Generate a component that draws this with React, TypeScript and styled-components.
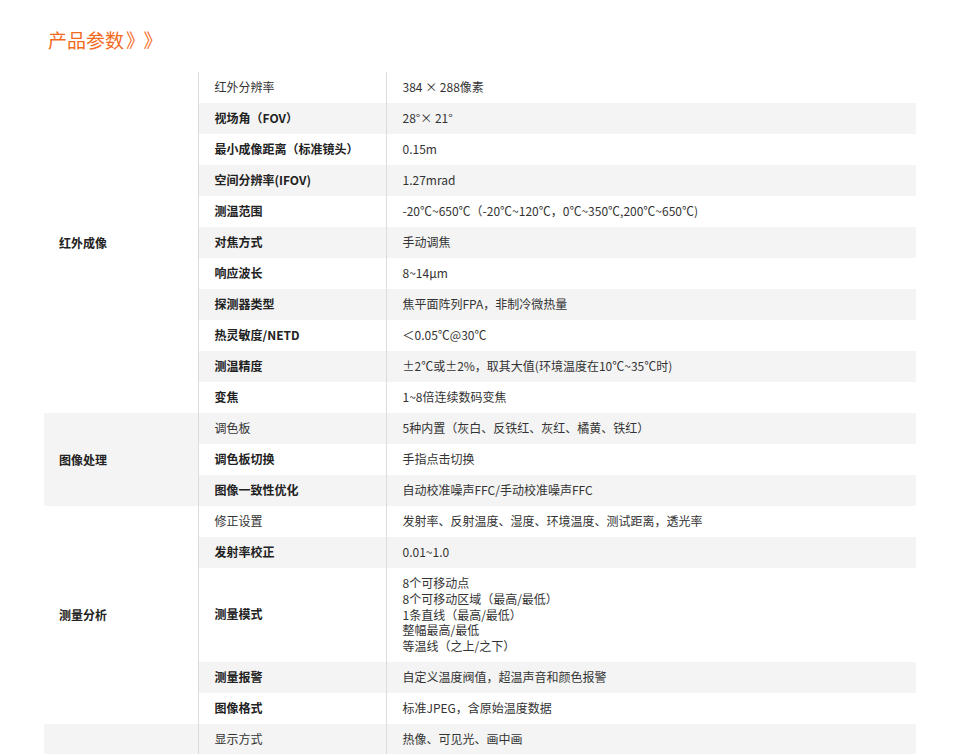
import React from "react";
import styled, { createGlobalStyle } from "styled-components";

const Global = createGlobalStyle`
  html, body { margin: 0; padding: 0; background: #fff; }
  body { font-family: "Noto Sans CJK SC", "Noto Sans", sans-serif; color: #333; }
`;

const Page = styled.div`
  padding: 28px 44px 0 44px;
  width: 872px;
`;

const Title = styled.h2`
  margin: 0 0 20px 4px;
  font-size: 19px;
  line-height: 24px;
  font-weight: 400;
  color: #f36a1d;
`;

const Arrows = styled.span`
  letter-spacing: 8px;
  margin-left: 2px;
`;

const Table = styled.table`
  width: 872px;
  border-collapse: collapse;
  table-layout: fixed;
  font-size: 12px;
  line-height: 16px;
  tbody tr:nth-child(even) { background: #f4f4f4; }
`;

const Col = styled.col<{ $w: number }>`
  width: ${(p) => p.$w}px;
`;

const GroupCell = styled.td`
  padding: 0 15px;
  font-weight: 700;
  vertical-align: middle;
  color: #222;
`;

const LabelCell = styled.td<{ $bold: boolean }>`
  height: 31px;
  box-sizing: border-box;
  padding: 7px 16px 8px;
  border-left: 1px solid #dcdcdc;
  font-weight: ${(p) => (p.$bold ? 700 : 400)};
  color: ${(p) => (p.$bold ? "#222" : "#333")};
  vertical-align: middle;
`;

const ValueCell = styled.td`
  padding: 7px 16px 8px;
  border-left: 1px solid #dcdcdc;
  color: #333;
  vertical-align: middle;
`;

const Line = styled.div`
  line-height: 15.8px;
`;

type Row = [string, string | string[]];
type Group = { name: string; rows: Row[] };

const groups: Group[] = [
  {
    name: "红外成像",
    rows: [
      ["红外分辨率", "384 × 288像素"],
      ["视场角（FOV）", "28°× 21°"],
      ["最小成像距离（标准镜头）", "0.15m"],
      ["空间分辨率(IFOV)", "1.27mrad"],
      ["测温范围", "-20℃~650℃（-20℃~120℃，0℃~350℃,200℃~650℃)"],
      ["对焦方式", "手动调焦"],
      ["响应波长", "8~14μm"],
      ["探测器类型", "焦平面阵列FPA，非制冷微热量"],
      ["热灵敏度/NETD", "＜0.05℃@30℃"],
      ["测温精度", "±2℃或±2%，取其大值(环境温度在10℃~35℃时)"],
      ["变焦", "1~8倍连续数码变焦"],
    ],
  },
  {
    name: "图像处理",
    rows: [
      ["调色板", "5种内置（灰白、反铁红、灰红、橘黄、铁红）"],
      ["调色板切换", "手指点击切换"],
      ["图像一致性优化", "自动校准噪声FFC/手动校准噪声FFC"],
    ],
  },
  {
    name: "测量分析",
    rows: [
      ["修正设置", "发射率、反射温度、湿度、环境温度、测试距离，透光率"],
      ["发射率校正", "0.01~1.0"],
      [
        "测量模式",
        [
          "8个可移动点",
          "8个可移动区域（最高/最低）",
          "1条直线（最高/最低）",
          "整幅最高/最低",
          "等温线（之上/之下）",
        ],
      ],
      ["测量报警", "自定义温度阀值，超温声音和颜色报警"],
      ["图像格式", "标准JPEG，含原始温度数据"],
    ],
  },
  {
    name: "显示存储",
    rows: [
      ["显示方式", "热像、可见光、画中画"],
      ["存储方式", "内置存储"],
      ["图像存储", "支持"],
    ],
  },
];

export default function App() {
  return (
    <>
      <Global />
      <Page>
        <Title>
          产品参数<Arrows>》》</Arrows>
        </Title>
        <Table>
          <colgroup>
            <Col $w={154} />
            <Col $w={188} />
            <Col $w={530} />
          </colgroup>
          <tbody>
            {groups.map((g) =>
              g.rows.map(([label, value], i) => (
                <tr key={g.name + label}>
                  {i === 0 && <GroupCell rowSpan={g.rows.length}>{g.name}</GroupCell>}
                  <LabelCell $bold={i !== 0}>{label}</LabelCell>
                  <ValueCell>
                    {Array.isArray(value)
                      ? value.map((v) => <Line key={v}>{v}</Line>)
                      : value}
                  </ValueCell>
                </tr>
              ))
            )}
          </tbody>
        </Table>
      </Page>
    </>
  );
}
